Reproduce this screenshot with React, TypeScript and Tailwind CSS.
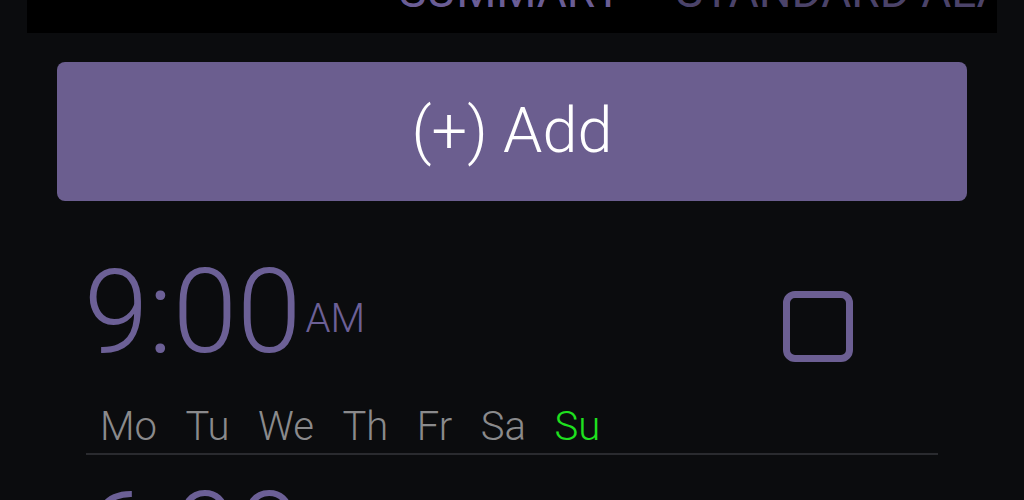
const days = [
  { label: 'Mo', on: false },
  { label: 'Tu', on: false },
  { label: 'We', on: false },
  { label: 'Th', on: false },
  { label: 'Fr', on: false },
  { label: 'Sa', on: false },
  { label: 'Su', on: true },
]

function Alarm({ time, meridiem }: { time: string; meridiem: string }) {
  return (
    <div className="mx-[86px] pt-[22px]">
      <div className="flex items-start justify-between">
        <div className="flex items-start">
          <span className="-ml-[2px] text-[116px] font-light leading-none text-[#6c6096]">{time}</span>
          <span className="ml-[4px] mt-[45px] text-[40px] font-light leading-none text-[#6c6096]">
            {meridiem}
          </span>
        </div>
        <div className="mr-[85px] mt-[37px] h-[71px] w-[70px] rounded-[12px] border-[7px] border-[#6c5f93]" />
      </div>
      <div className="mt-[37px] flex gap-[28.5px] pl-[14px] text-[40px] font-light leading-none">
        {days.map((d) => (
          <span key={d.label} className={d.on ? 'text-[#1fe01f]' : 'text-[#8a8a8c]'}>
            {d.label}
          </span>
        ))}
      </div>
      <div className="mt-[6px] h-[2px] bg-[#2a2b2f]" />
    </div>
  )
}

export default function App() {
  return (
    <div
      className="h-[500px] w-full overflow-hidden bg-[#0b0c0e]"
      style={{ fontFamily: 'Roboto, "Noto Sans", sans-serif' }}
    >
      <div className="mx-[27px] h-[33px] overflow-hidden bg-black">
        <div className="-mt-[32px] flex gap-[54px] whitespace-nowrap pl-[372px] text-[46px] leading-none">
          <span className="text-[#6a5d95]">SUMMARY</span>
          <span className="text-[#4b4369]">STANDARD ALARMS</span>
        </div>
      </div>
      <div className="pt-[29px]">
        <button className="mx-[57px] flex h-[139px] w-[910px] items-center justify-center rounded-[8px] bg-[#6b5e8f] text-[63px] font-light text-white">
          (+) Add
        </button>
      </div>
      <div className="pt-[31px]">
        <Alarm time="9:00" meridiem="AM" />
        <Alarm time="6:00" meridiem="AM" />
      </div>
    </div>
  )
}
